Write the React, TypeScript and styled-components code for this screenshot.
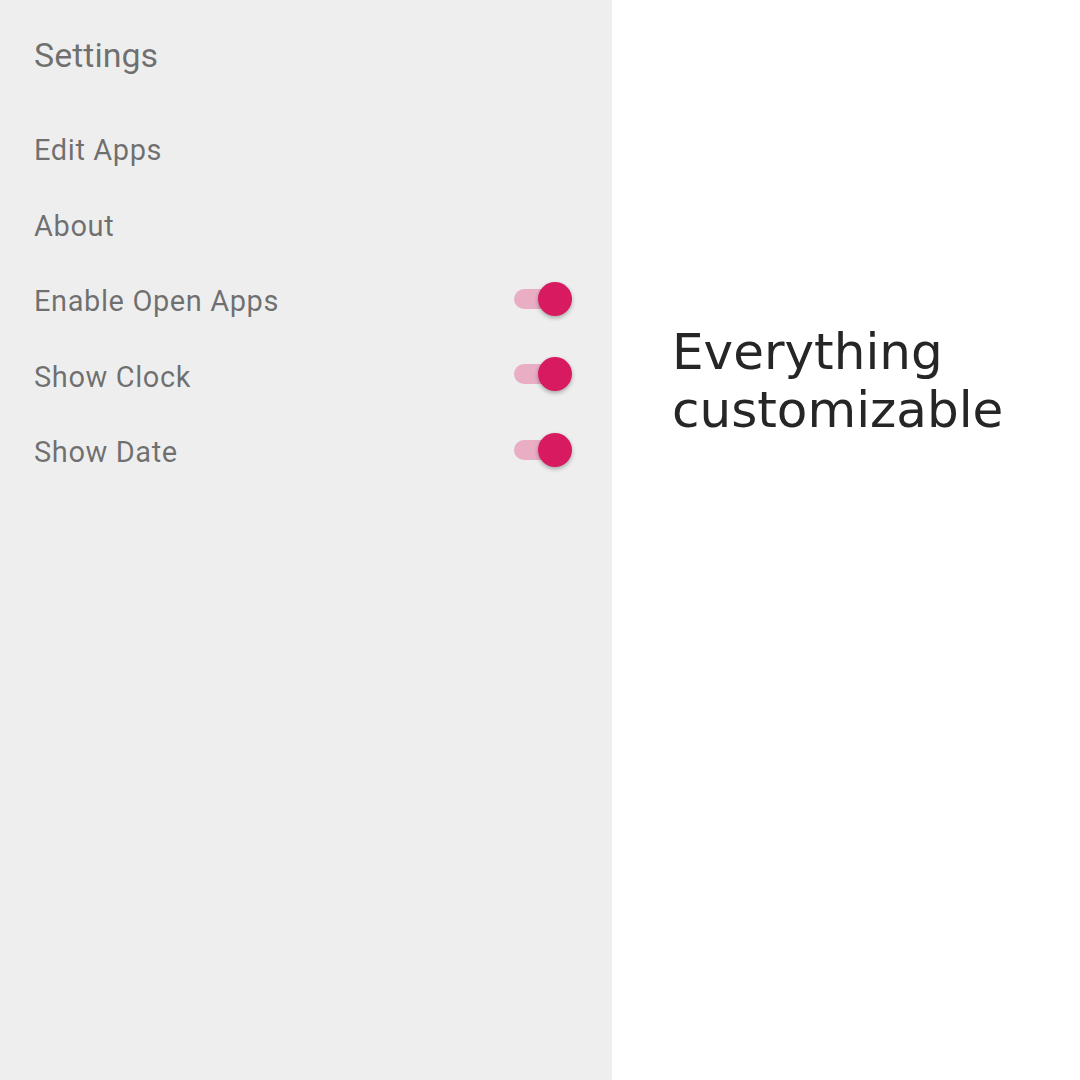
import React from "react";
import styled, { createGlobalStyle } from "styled-components";

const GlobalStyle = createGlobalStyle`
  html, body {
    margin: 0;
    padding: 0;
    background: #ffffff;
  }
  #root {
    width: 1080px;
    height: 1080px;
  }
`;

const Page = styled.div`
  display: flex;
  width: 1080px;
  height: 1080px;
`;

const SettingsPanel = styled.div`
  width: 612px;
  box-sizing: border-box;
  background: #eeeeee;
  padding: 38px 40px 0 34px;
  display: flex;
  flex-direction: column;
  font-family: Roboto, "Liberation Sans", sans-serif;
  color: rgba(0, 0, 0, 0.54);
`;

const Title = styled.div`
  font-size: 34px;
  line-height: 34px;
  margin-bottom: 41px;
`;

const Row = styled.div`
  height: 75.5px;
  display: flex;
  align-items: center;
  justify-content: space-between;
`;

const Label = styled.span`
  font-size: 29px;
  line-height: 29px;
  letter-spacing: 0.6px;
`;

const Switch = styled.div`
  display: flex;
  align-items: center;
  margin-bottom: 6px;
`;

const Track = styled.div<{ $on: boolean }>`
  width: 48px;
  height: 20px;
  border-radius: 10px;
  background: ${(p) => (p.$on ? "#e9aec4" : "#bdbdbd")};
`;

const Thumb = styled.div<{ $on: boolean }>`
  width: 34px;
  height: 34px;
  border-radius: 50%;
  margin-left: -24px;
  background: ${(p) => (p.$on ? "#d81b60" : "#fafafa")};
  box-shadow: 0 2px 4px rgba(0, 0, 0, 0.3);
`;

const Showcase = styled.div`
  flex: 1;
  background: #ffffff;
  padding: 323px 0 0 60px;
`;

const Headline = styled.div`
  font-family: "DejaVu Sans", sans-serif;
  font-size: 50px;
  color: #262626;
  line-height: normal;
`;

const Toggle = ({ on }: { on: boolean }) => (
  <Switch>
    <Track $on={on} />
    <Thumb $on={on} />
  </Switch>
);

const items: { label: string; toggle?: boolean }[] = [
  { label: "Edit Apps" },
  { label: "About" },
  { label: "Enable Open Apps", toggle: true },
  { label: "Show Clock", toggle: true },
  { label: "Show Date", toggle: true },
];

export default function App() {
  return (
    <>
      <GlobalStyle />
      <Page>
        <SettingsPanel>
          <Title>Settings</Title>
          {items.map((it) => (
            <Row key={it.label}>
              <Label>{it.label}</Label>
              {it.toggle && <Toggle on />}
            </Row>
          ))}
        </SettingsPanel>
        <Showcase>
          <Headline>
            Everything
            <br />
            customizable
          </Headline>
        </Showcase>
      </Page>
    </>
  );
}
